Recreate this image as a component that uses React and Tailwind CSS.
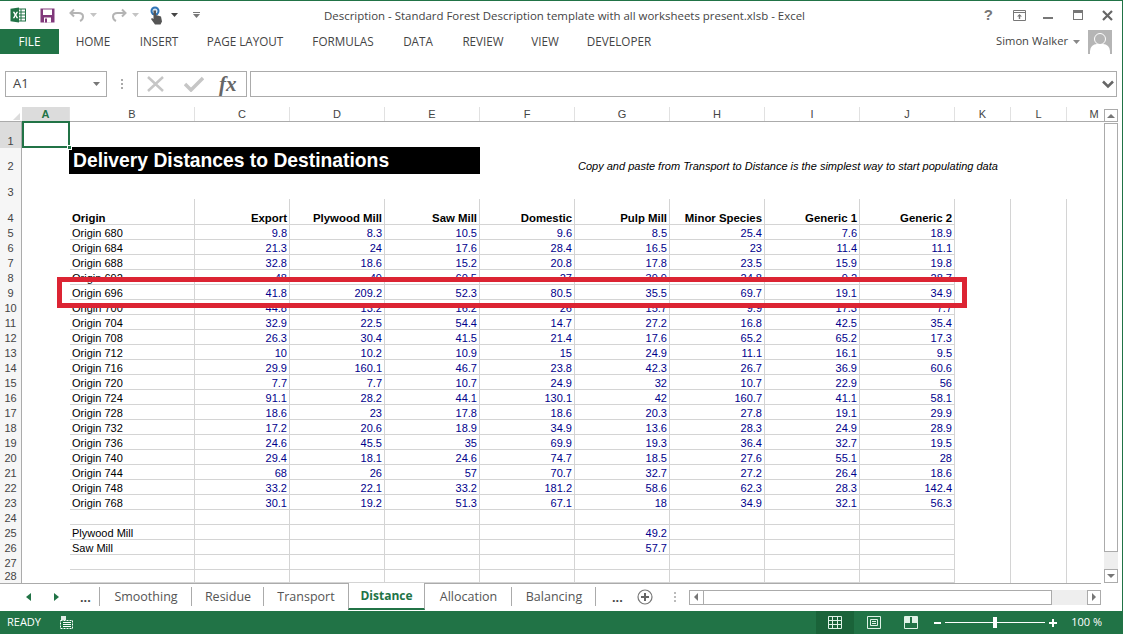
const COLS = ['A', 'B', 'C', 'D', 'E', 'F', 'G', 'H', 'I', 'J', 'K', 'L', 'M']

const rows = [
  ['Origin 680', '9.8', '8.3', '10.5', '9.6', '8.5', '25.4', '7.6', '18.9'],
  ['Origin 684', '21.3', '24', '17.6', '28.4', '16.5', '23', '11.4', '11.1'],
  ['Origin 688', '32.8', '18.6', '15.2', '20.8', '17.8', '23.5', '15.9', '19.8'],
  ['Origin 692', '48', '49', '60.5', '27', '39.9', '24.8', '9.2', '28.7'],
  ['Origin 696', '41.8', '209.2', '52.3', '80.5', '35.5', '69.7', '19.1', '34.9'],
  ['Origin 700', '44.8', '13.2', '16.2', '26', '15.7', '9.9', '17.3', '7.7'],
  ['Origin 704', '32.9', '22.5', '54.4', '14.7', '27.2', '16.8', '42.5', '35.4'],
  ['Origin 708', '26.3', '30.4', '41.5', '21.4', '17.6', '65.2', '65.2', '17.3'],
  ['Origin 712', '10', '10.2', '10.9', '15', '24.9', '11.1', '16.1', '9.5'],
  ['Origin 716', '29.9', '160.1', '46.7', '23.8', '42.3', '26.7', '36.9', '60.6'],
  ['Origin 720', '7.7', '7.7', '10.7', '24.9', '32', '10.7', '22.9', '56'],
  ['Origin 724', '91.1', '28.2', '44.1', '130.1', '42', '160.7', '41.1', '58.1'],
  ['Origin 728', '18.6', '23', '17.8', '18.6', '20.3', '27.8', '19.1', '29.9'],
  ['Origin 732', '17.2', '20.6', '18.9', '34.9', '13.6', '28.3', '24.9', '28.9'],
  ['Origin 736', '24.6', '45.5', '35', '69.9', '19.3', '36.4', '32.7', '19.5'],
  ['Origin 740', '29.4', '18.1', '24.6', '74.7', '18.5', '27.6', '55.1', '28'],
  ['Origin 744', '68', '26', '57', '70.7', '32.7', '27.2', '26.4', '18.6'],
  ['Origin 748', '33.2', '22.1', '33.2', '181.2', '58.6', '62.3', '28.3', '142.4'],
  ['Origin 768', '30.1', '19.2', '51.3', '67.1', '18', '34.9', '32.1', '56.3'],
  ['', '', '', '', '', '', '', '', ''],
  ['Plywood Mill', '', '', '', '', '49.2', '', '', ''],
  ['Saw Mill', '', '', '', '', '57.7', '', '', ''],
  ['', '', '', '', '', '', '', '', ''],
  ['', '', '', '', '', '', '', '', ''],
]

const heads = ['Export', 'Plywood Mill', 'Saw Mill', 'Domestic', 'Pulp Mill', 'Minor Species', 'Generic 1', 'Generic 2']
const menu = [
  ['HOME', 'w-[68px]'], ['INSERT', 'w-[64px]'], ['PAGE LAYOUT', 'w-[108px]'], ['FORMULAS', 'w-[88px]'],
  ['DATA', 'w-[62px]'], ['REVIEW', 'w-[68px]'], ['VIEW', 'w-[56px]'], ['DEVELOPER', 'w-[92px]'],
]
const tabs = [
  ['Smoothing', 'w-[92px]'], ['Residue', 'w-[72px]'], ['Transport', 'w-[84px]'], ['Distance', 'w-[77px]'],
  ['Allocation', 'w-[87px]'], ['Balancing', 'w-[84px]'],
]

function RowHead({ n, active }) {
  return (
    <div className={`flex items-end justify-center border-r border-[#ababab] text-[11px] leading-[13px] text-[#444] overflow-hidden ${active ? 'bg-[#dcdcdc]' : 'bg-[#f6f6f6]'}`}>
      {n}
    </div>
  )
}

function ExcelLogo() {
  return (
    <svg width="16" height="16" viewBox="0 0 16 16">
      <rect x="6" y="2" width="9.5" height="12" fill="#fff" stroke="#217346" />
      <path d="M7 5h8M7 8h8M7 11h8M11 2v12" stroke="#217346" strokeWidth="1" />
      <path d="M0.5 1.8 9 0.5v15l-8.5-1.3z" fill="#217346" />
      <path d="M2.8 4.8h1.7l1 2 1-2h1.6L6.4 8l1.8 3.2H6.5l-1-2.1-1 2.1H2.8L4.6 8z" fill="#fff" />
    </svg>
  )
}

function SaveIcon() {
  return (
    <svg width="15" height="15" viewBox="0 0 15 15">
      <path d="M0.5 0.5h14v14h-14z" fill="#80397b" />
      <rect x="3" y="1.5" width="9" height="5.5" fill="#fff" />
      <rect x="4" y="9.5" width="7" height="5" fill="#fff" />
      <rect x="5" y="10.5" width="2" height="4" fill="#80397b" />
    </svg>
  )
}

function Caret({ color = '#777' }) {
  return (
    <svg width="7" height="4" viewBox="0 0 7 4"><path d="M0 0h7L3.5 4z" fill={color} /></svg>
  )
}

function TitleBar() {
  return (
    <div className="relative flex h-[28px] shrink-0 items-center">
      <div className="ml-[10px]"><ExcelLogo /></div>
      <div className="ml-[14px]"><SaveIcon /></div>
      <svg className="ml-[14px]" width="16" height="14" viewBox="0 0 16 14" fill="none">
        <path d="M5 1.5 1.5 5 5 8.5M2 5h7.5c3.5 0 4.5 2 4.5 3.5S13 12 11 13" stroke="#b4b4b4" strokeWidth="2" />
      </svg>
      <div className="ml-[5px]"><Caret color="#c4c4c4" /></div>
      <svg className="ml-[14px]" width="16" height="14" viewBox="0 0 16 14" fill="none">
        <path d="M11 1.5 14.5 5 11 8.5M14 5H6.5C3 5 2 7 2 8.5S3 12 5 13" stroke="#b4b4b4" strokeWidth="2" />
      </svg>
      <div className="ml-[5px]"><Caret color="#c4c4c4" /></div>
      <svg className="ml-[10px]" width="14" height="19" viewBox="0 0 14 19">
        <circle cx="6" cy="5" r="4.5" fill="#2f74b5" />
        <circle cx="6" cy="5" r="2.5" fill="#d8e6f3" />
        <path d="M4.5 4.5h2.5v4.5l5 1.5 1 5-1.5 3H6L2 13l1-1 1.5 1z" fill="#555" />
      </svg>
      <div className="ml-[8px]"><Caret color="#444" /></div>
      <div className="ml-[15px] flex flex-col items-center gap-[1px]">
        <div className="h-px w-[7px] bg-[#777]" />
        <Caret />
      </div>
      <div className="absolute inset-x-0 top-[5px] pl-[6px] text-center text-[11.45px] leading-[20px] text-[#444] [font-family:'Open_Sans',sans-serif]">
        Description - Standard Forest Description template with all worksheets present.xlsb - Excel
      </div>
      <div className="ml-auto flex items-center">
        <span className="mr-[20px] text-[15px] font-bold text-[#777] [font-family:'Liberation_Sans',sans-serif]">?</span>
        <svg className="mr-[17px]" width="13" height="11" viewBox="0 0 13 11" fill="none">
          <path d="M0.5 0.5h12v10h-12zM0.5 2.5h12" stroke="#777" />
          <path d="M6.5 4 4 6.5h1.8V9h1.4V6.5H9z" fill="#777" />
        </svg>
        <div className="mr-[20px] mt-[6px] h-[2px] w-[10px] bg-[#777]" />
        <div className="mr-[19px] h-[10px] w-[10px] border border-t-[3px] border-[#777]" />
        <svg className="mr-[10px]" width="11" height="11" viewBox="0 0 11 11">
          <path d="M1 1l9 9M10 1l-9 9" stroke="#666" strokeWidth="2.2" />
        </svg>
      </div>
    </div>
  )
}

function MenuBar() {
  return (
    <div className="flex h-[25px] shrink-0 items-stretch text-[11.7px] text-[#444] [font-family:'Open_Sans',sans-serif]">
      <div className="flex w-[59px] items-center justify-center bg-[#217346] text-white">FILE</div>
      {menu.map(([label, w]) => (
        <div key={label} className={`flex items-center justify-center ${w}`}>{label}</div>
      ))}
      <div className="ml-auto flex items-center">
        <span className="mr-[5px] text-[11.2px]">Simon Walker</span>
        <Caret color="#888" />
        <div className="relative ml-[8px] mr-[11px] h-[24px] w-[24px] overflow-hidden bg-[#b5b5b5]">
          <div className="absolute left-[6px] top-[3px] h-[12px] w-[12px] rounded-full border border-white bg-[#b5b5b5]" />
          <div className="absolute left-[2px] top-[14px] h-[14px] w-[20px] rounded-t-[7px] bg-white" />
        </div>
      </div>
    </div>
  )
}

function FormulaBar() {
  return (
    <div className="mt-[17px] flex h-[26px] shrink-0 items-stretch pl-[5px] pr-[6px] text-[#444] [font-family:'Open_Sans',sans-serif]">
      <div className="flex w-[102px] items-center justify-between border border-[#ababab] pl-[7px] pr-[6px] text-[13px]">
        A1
        <Caret color="#777" />
      </div>
      <div className="mx-[13px] flex w-[4px] flex-col items-center justify-center gap-[2px]">
        <div className="h-[2px] w-[2px] bg-[#aaa]" />
        <div className="h-[2px] w-[2px] bg-[#aaa]" />
        <div className="h-[2px] w-[2px] bg-[#aaa]" />
      </div>
      <div className="flex w-[110px] items-center border border-[#ababab] pl-[9px]">
        <svg width="18" height="16" viewBox="0 0 18 16"><path d="M1 1l15 14M16 1 1 15" stroke="#c6c6c6" strokeWidth="2.5" /></svg>
        <svg className="ml-[19px]" width="20" height="16" viewBox="0 0 20 16" fill="none"><path d="M1 8l6 6L19 2" stroke="#c6c6c6" strokeWidth="3.5" /></svg>
        <span className="ml-[15px] text-[21px] font-bold italic leading-none text-[#666] [font-family:'Liberation_Serif',serif]">fx</span>
      </div>
      <div className="ml-[3px] flex flex-1 items-center justify-end border border-[#ababab] pr-[2px]">
        <svg width="12" height="9" viewBox="0 0 12 9" fill="none"><path d="M1 1.5l5 5 5-5" stroke="#666" strokeWidth="2.5" /></svg>
      </div>
    </div>
  )
}

const GRID = 'grid grid-cols-[22px_48px_125px_95px_95px_95px_95px_95px_95px_95px_95px_56px_56px_34px]'

function Sheet() {
  return (
    <div className="relative flex-1 overflow-hidden text-[11px] leading-[14px] [font-family:'Liberation_Sans',sans-serif]">
      <div className={`${GRID} h-[15px] border-b border-[#ababab] text-center text-[#444] leading-[14px]`}>
        <div className="relative bg-white">
          <div className="absolute bottom-[1px] right-[2px] h-0 w-0 border-b-[7px] border-l-[7px] border-b-[#dcdcdc] border-l-transparent" />
        </div>
        {COLS.map((c, i) => (
          <div key={c} className={`border-r border-[#e1e1e1] ${i === 0 ? 'bg-[#dcdcdc] font-bold text-[#217346]' : ''} ${i === 12 ? 'border-r-0 pl-[20px]' : ''}`}>{c}</div>
        ))}
      </div>
      <div className={`${GRID} grid-rows-[26px_25px_26px_26px] bg-white`}>
        <RowHead n={1} active />
        <div className="relative col-span-13">
          <div className="absolute -top-px left-0 z-10 h-[27px] w-[48px] border-2 border-[#217346]" />
          <div className="absolute left-[45px] top-[23px] z-10 h-[5px] w-[5px] border border-white bg-[#217346]" />
        </div>
        <RowHead n={2} />
        <div />
        <div className="col-span-4 -mb-px -ml-px -mt-px flex items-center bg-black pl-[4px] text-[19.3px] font-bold text-white">Delivery Distances to Destinations</div>
        <div className="col-span-8 flex items-center whitespace-nowrap pl-[98px] pt-[11px] text-[11px] italic text-black">
          Copy and paste from Transport to Distance is the simplest way to start populating data
        </div>
        <RowHead n={3} />
        <div className="col-span-13" />
        <RowHead n={4} />
        <div />
        <div className="flex items-end border-b border-r border-[#d4d4d4] pl-[2px] text-[11.4px] font-bold leading-[12px] text-black">Origin</div>
        {heads.map((h) => (
          <div key={h} className="flex items-end justify-end border-b border-r border-[#d4d4d4] pr-[2px] text-[11.4px] font-bold leading-[12px] text-black">{h}</div>
        ))}
        <div className="border-r border-[#d4d4d4]" />
        <div className="border-r border-[#d4d4d4]" />
        <div />
      </div>
      <div className={`${GRID} grid-rows-[repeat(23,15px)_13px] bg-white`}>
        {rows.map((r, i) => (
          <Row key={i} n={i + 5} cells={r} />
        ))}
      </div>
    </div>
  )
}

function Row({ n, cells }) {
  return (
    <>
      <RowHead n={n} />
      <div />
      <div className="border-b border-r border-[#d4d4d4] pl-[2px] pt-px text-black">{cells[0]}</div>
      {cells.slice(1).map((v, i) => (
        <div key={i} className="border-b border-r border-[#d4d4d4] pr-[2px] pt-px text-right text-[#00008b]">{v}</div>
      ))}
      <div className="border-r border-[#d4d4d4]" />
      <div className="border-r border-[#d4d4d4]" />
      <div />
    </>
  )
}

function ScrollBar() {
  return (
    <div className="flex w-[14px] shrink-0 flex-col">
      <div className="mt-[2px] flex h-[13px] shrink-0 items-center justify-center border border-[#ababab] bg-white">
        <svg width="8" height="4" viewBox="0 0 8 4"><path d="M0 4h8L4 0z" fill="#777" /></svg>
      </div>
      <div className="mt-[1px] h-[429px] shrink-0 border border-[#ababab] bg-white" />
      <div className="flex-1 bg-[#eeeeee]" />
      <div className="flex h-[14px] shrink-0 items-center justify-center border border-[#ababab] bg-white">
        <svg width="8" height="4" viewBox="0 0 8 4"><path d="M0 0h8L4 4z" fill="#777" /></svg>
      </div>
    </div>
  )
}

function TabStrip() {
  return (
    <div className="h-[28px] shrink-0 pr-[22px]">
      <div className="flex h-[27px] items-stretch border-t border-[#ababab] text-[12.5px] text-[#555] [font-family:'Open_Sans',sans-serif]">
        <div className="relative flex w-[100px] items-center">
          <svg className="ml-[26px]" width="5" height="8" viewBox="0 0 5 8"><path d="M5 0v8L0 4z" fill="#217346" /></svg>
          <svg className="ml-[23px]" width="5" height="8" viewBox="0 0 5 8"><path d="M0 0v8l5-4z" fill="#217346" /></svg>
          <span className="ml-[21px] mt-[3px] font-bold leading-none text-[#444]">...</span>
          <div className="absolute bottom-[4px] right-0 top-[3px] w-px bg-[#ababab]" />
        </div>
        {tabs.map(([t, w]) => t === 'Distance' ? (
          <div key={t} className={`-mt-px flex items-center justify-center border-x border-b-2 border-x-[#ababab] border-b-[#217346] bg-white pt-px text-[12px] font-bold text-[#217346] ${w}`}>{t}</div>
        ) : (
          <div key={t} className={`relative flex items-center justify-center ${w}`}>
            {t}
            {t !== 'Transport' && <div className="absolute bottom-[4px] right-0 top-[3px] w-px bg-[#ababab]" />}
          </div>
        ))}
        <span className="ml-[16px] mt-[3px] self-center font-bold leading-none text-[#444]">...</span>
        <svg className="ml-[14px] self-center" width="16" height="16" viewBox="0 0 16 16" fill="none">
          <circle cx="8" cy="8" r="7" stroke="#777" strokeWidth="1.2" />
          <path d="M8 4v8M4 8h8" stroke="#666" strokeWidth="2" />
        </svg>
        <div className="ml-[21px] flex flex-col justify-center gap-[2px]">
          <div className="h-[2px] w-[2px] bg-[#bbb]" />
          <div className="h-[2px] w-[2px] bg-[#bbb]" />
          <div className="h-[2px] w-[2px] bg-[#bbb]" />
        </div>
        <div className="ml-[13px] flex flex-1 items-center">
          <div className="flex h-[15px] w-[15px] shrink-0 items-center justify-center border border-[#ababab]">
            <svg width="4" height="8" viewBox="0 0 4 8"><path d="M4 0v8L0 4z" fill="#777" /></svg>
          </div>
          <div className="h-[15px] w-[348px] shrink-0 border border-l-0 border-[#ababab]" />
          <div className="h-[15px] flex-1 bg-[#eeeeee]" />
          <div className="flex h-[15px] w-[14px] shrink-0 items-center justify-center border border-[#ababab]">
            <svg width="4" height="8" viewBox="0 0 4 8"><path d="M0 0v8l4-4z" fill="#777" /></svg>
          </div>
        </div>
      </div>
    </div>
  )
}

function StatusBar() {
  return (
    <div className="flex h-[23px] shrink-0 items-center bg-[#217346] text-[11px] text-white [font-family:'Open_Sans',sans-serif]">
      <span className="ml-[7px]">READY</span>
      <svg className="ml-[19px]" width="14" height="13" viewBox="0 0 14 13" fill="none">
        <rect x="0.5" y="4.5" width="12" height="8" stroke="#fff" strokeDasharray="2 1" />
        <rect x="1" y="0" width="5" height="4" fill="#dfeee6" />
        <path d="M3 6.5h8M3 8.5h8M3 10.5h8" stroke="#fff" />
      </svg>
      <div className="ml-auto flex h-full items-center">
        <div className="flex h-full w-[38px] items-center justify-center bg-[#1a6339]">
          <svg width="14" height="13" viewBox="0 0 14 13" fill="none" stroke="#dff2e6"><path d="M0.5 0.5h13v12h-13zM0.5 4.5h13M0.5 8.5h13M4.5 0.5v12M9.5 0.5v12" /></svg>
        </div>
        <svg className="ml-[13px]" width="14" height="13" viewBox="0 0 14 13" fill="none" stroke="#dff2e6">
          <path d="M0.5 0.5h13v12h-13zM3.5 3.5h7v6h-7zM5 5.5h4M5 7.5h4" />
        </svg>
        <svg className="ml-[23px]" width="14" height="13" viewBox="0 0 14 13">
          <path d="M0.5 0.5h13v12h-13z" fill="none" stroke="#dff2e6" />
          <path d="M1 1h5v6H1zM8 1h5v6H8z" fill="#dff2e6" />
        </svg>
        <div className="ml-[16px] h-[2px] w-[7px] bg-white" />
        <div className="relative ml-[4px] flex h-[11px] w-[100px] items-center">
          <div className="h-px w-full bg-white" />
          <div className="absolute left-[48px] top-0 h-[11px] w-[4px] bg-white" />
        </div>
        <svg className="ml-[4px]" width="8" height="8" viewBox="0 0 8 8"><path d="M4 0v8M0 4h8" stroke="#fff" strokeWidth="2" /></svg>
        <span className="ml-[14px] mr-[21px]">100 %</span>
      </div>
    </div>
  )
}

export default function App() {
  return (
    <div className="relative flex h-[634px] w-[1123px] flex-col overflow-hidden bg-white">
      <div className="h-px shrink-0 bg-[#217346]" />
      <TitleBar />
      <MenuBar />
      <FormulaBar />
      <div className="mt-[10px] flex min-h-0 flex-1 pr-[5px]">
        <Sheet />
        <ScrollBar />
      </div>
      <TabStrip />
      <StatusBar />
      <div className="pointer-events-none absolute left-[57px] top-[277px] h-[31px] w-[910px] border-[5px] border-[#dc2433]" />
      <div className="absolute inset-y-0 right-0 w-px bg-[#217346]" />
    </div>
  )
}
